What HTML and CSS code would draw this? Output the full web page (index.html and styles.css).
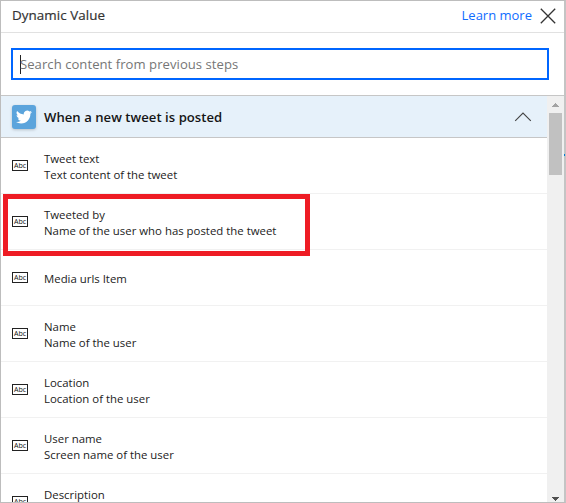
FILE: index.html
```
<!DOCTYPE html>
<html lang="en">
<head>
<meta charset="utf-8">
<title>Dynamic Value</title>
<link rel="stylesheet" href="styles.css">
</head>
<body>
<svg class="defs" width="0" height="0" aria-hidden="true">
  <symbol id="abc" viewBox="0 0 16 11">
    <rect x=".5" y=".5" width="15" height="10" fill="#fff" stroke="#222"/>
    <text x="2" y="8.1" class="abc-text" textLength="12.2" lengthAdjust="spacingAndGlyphs">Abc</text>
  </symbol>
</svg>
<main class="panel">
  <header class="header">
    <h1 class="title"><span>Dynamic Value</span></h1>
    <a class="learn"><span>Learn more</span></a>
    <svg class="close" width="16" height="16" viewBox="0 0 16 16"><path d="M.8.8 15.2 15.2M15.2.8.8 15.2" fill="none" stroke="#333" stroke-width="1.3"/></svg>
  </header>
  <div class="search-area">
    <div class="search"><i class="caret"></i><span class="placeholder">Search content from previous steps</span></div>
  </div>
  <div class="content">
    <div class="list">
      <div class="section">
        <div class="logo"><svg width="16" height="14" viewBox="0 2 24 20"><path fill="#fff" d="M23.95 4.57a10 10 0 0 1-2.82.77 4.96 4.96 0 0 0 2.16-2.72c-.95.55-2 .95-3.13 1.18a4.92 4.92 0 0 0-8.38 4.48C7.69 8.1 4.07 6.13 1.64 3.16a4.92 4.92 0 0 0 1.52 6.57 4.9 4.9 0 0 1-2.23-.61v.06c0 2.38 1.7 4.37 3.95 4.83a5 5 0 0 1-2.21.08 4.94 4.94 0 0 0 4.6 3.42A9.87 9.87 0 0 1 0 19.54a14 14 0 0 0 7.55 2.21c9.05 0 14-7.5 14-13.98 0-.21 0-.42-.02-.63a9.94 9.94 0 0 0 2.42-2.57z"/></svg></div>
        <h2 class="section-title">When a new tweet is posted</h2>
        <svg class="chevron" width="18" height="10" viewBox="0 0 18 10"><path d="M1.2 8.8 9 1 16.8 8.8" fill="none" stroke="#444" stroke-width="1.1"/></svg>
      </div>
      <div class="row"><svg class="abc"><use href="#abc"/></svg><p><span>Tweet text</span><br><span>Text content of the tweet</span></p></div>
      <div class="row"><svg class="abc"><use href="#abc"/></svg><p><span>Tweeted by</span><br><span>Name of the user who has posted the tweet</span></p></div>
      <div class="row single"><svg class="abc"><use href="#abc"/></svg><p><span>Media urls Item</span></p></div>
      <div class="row"><svg class="abc"><use href="#abc"/></svg><p><span>Name</span><br><span>Name of the user</span></p></div>
      <div class="row"><svg class="abc"><use href="#abc"/></svg><p><span>Location</span><br><span>Location of the user</span></p></div>
      <div class="row"><svg class="abc"><use href="#abc"/></svg><p><span>User name</span><br><span>Screen name of the user</span></p></div>
      <div class="row"><svg class="abc"><use href="#abc"/></svg><p><span>Description</span></p></div>
    </div>
    <div class="scrollbar">
      <svg class="up" width="7" height="4" viewBox="0 0 7 4" shape-rendering="crispEdges"><path d="M3 0h1v1h1v1h1v1h1v1H0V3h1V2h1V1h1z" fill="#a3a3a3"/></svg>
      <div class="thumb"></div>
      <svg class="down" width="7" height="4" viewBox="0 0 7 4" shape-rendering="crispEdges"><path d="M0 0h7v1H6v1H5v1H4v1H3V3H2V2H1V1H0z" fill="#505050"/></svg>
    </div>
  </div>
</main>
<div class="highlight"></div>
<div class="edge-mark"></div>
</body>
</html>
```
FILE: styles.css
```
* { box-sizing: border-box; }
body { margin: 0; width: 566px; height: 503px; overflow: hidden; background: #fff; font-family: "Open Sans", "Noto Sans", sans-serif; color: #222; position: relative; }
h1, h2, p { margin: 0; font-weight: 400; }
.defs { position: absolute; }
.panel { width: 566px; height: 503px; border: 1px solid #bdbdbd; border-right: 2px solid #c4c4c4; display: flex; flex-direction: column; overflow: hidden; }
.header { height: 32px; flex: none; border-bottom: 1px solid #e1e1e1; display: flex; align-items: center; padding: 0 8px 0 11px; }
.title { flex: 1; font-size: 13.4px; letter-spacing: .06px; line-height: 20px; color: #333; -webkit-text-stroke: .2px #333; padding-bottom: 3px; }
.learn { font-size: 13px; line-height: 20px; color: #0f6cff; margin-right: 8px; padding-bottom: 3px; }
.close { display: block; margin-bottom: 2px; }
.search-area { height: 62px; flex: none; padding: 15px 15px 0 10px; }
.search { height: 32px; border: 2px solid #0066ff; display: flex; align-items: center; padding-left: 7px; }
.caret { width: 1px; height: 19px; background: #222; margin-right: -1px; }
.placeholder { font-size: 13.1px; letter-spacing: .04px; line-height: 20px; color: #767676; }
.content { height: 407px; flex: none; display: flex; border-top: 1px solid #c6c6c6; overflow: hidden; }
.list { flex: 1; min-width: 0; overflow: hidden; }
.section { height: 42px; background: #e6f1fa; border-bottom: 1px solid #c6c6c6; display: flex; align-items: center; padding: 0 15px 0 11px; }
.logo { width: 24px; height: 24px; border-radius: 3px; background: #5ba4dc; box-shadow: 0 1px 3px #0003; display: flex; align-items: center; justify-content: center; }
.section-title { flex: 1; margin-left: 8px; font-size: 13.1px; letter-spacing: .04px; line-height: 20px; font-weight: 600; color: #151515; }
.row { height: 56px; border-bottom: 1px solid #f1f1f1; display: flex; align-items: flex-start; padding: 13px 0 0 11px; }
.abc { width: 16px; height: 11px; margin: 9px 16px 0 0; }
.abc-text { font: 7.8px "Open Sans", sans-serif; fill: #111; }
.row p { font-size: 11.4px; line-height: 16px; white-space: nowrap; }
.single p { padding-top: 8px; }
.scrollbar { width: 17px; background: #f0f0f0; padding: 7px 2px 1px; display: flex; flex-direction: column; }
.up, .down { align-self: center; flex: none; }
.thumb { height: 62px; margin-top: 6px; background: #c1c1c1; }
.down { margin-top: auto; }
.highlight { position: absolute; left: 3px; top: 194px; width: 307px; height: 62px; border: 5px solid #ee1c24; }
.edge-mark { position: absolute; left: 564px; top: 154px; width: 1px; height: 2px; background: #0078d4; }
```
